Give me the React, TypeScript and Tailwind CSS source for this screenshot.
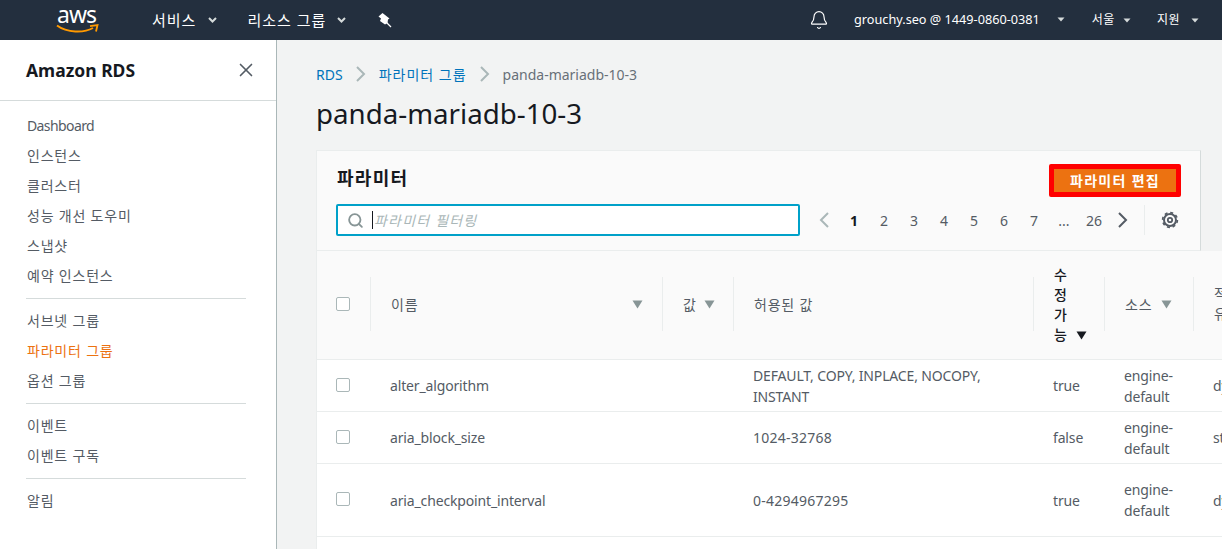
import { Bell, Search, X } from "lucide-react";

const font = "font-['Noto_Sans','Noto_Sans_CJK_KR',sans-serif]";

function NavChevron() {
  return (
    <svg width="9" height="6" viewBox="0 0 9 6" className="text-[#d5dbdb]">
      <path d="M1 1L4.5 4.5L8 1" stroke="currentColor" strokeWidth="2" fill="none" />
    </svg>
  );
}

function Caret() {
  return (
    <svg width="8" height="5" viewBox="0 0 8 5" className="text-[#d5dbdb]">
      <path d="M0.5 0.5H7.5L4 4.5Z" fill="currentColor" />
    </svg>
  );
}

function SortArrow({ dark }: { dark?: boolean }) {
  return (
    <svg width="11" height="9" viewBox="0 0 11 9" className={dark ? "text-[#16191f]" : "text-[#879596]"}>
      <path d="M0.5 0.5H10.5L5.5 8.5Z" fill="currentColor" />
    </svg>
  );
}

function Chevron({ left, className }: { left?: boolean; className: string }) {
  return (
    <svg width="10" height="16" viewBox="0 0 10 16" className={className}>
      <path d={left ? "M9 1L2 8L9 15" : "M1 1L8 8L1 15"} stroke="currentColor" strokeWidth="2" fill="none" />
    </svg>
  );
}

function PinIcon() {
  return (
    <svg width="14" height="15" viewBox="0 0 14 15" className="text-white">
      <path d="M4.5 0L0.5 3.5L3 5.5L2 8L7 11.5L9.5 10L10 6.5L11.5 5.5Z" fill="currentColor" />
      <path d="M8 9L13 14" stroke="currentColor" strokeWidth="1.3" />
    </svg>
  );
}

function GearIcon() {
  return (
    <svg width="18" height="18" viewBox="0 0 18 18" className="text-[#545b64]">
      <circle cx="9" cy="9" r="6" stroke="currentColor" strokeWidth="2" fill="none" />
      <circle cx="9" cy="9" r="2.2" stroke="currentColor" strokeWidth="1.8" fill="none" />
      <circle cx="9" cy="9" r="7.4" stroke="currentColor" strokeWidth="1.6" strokeDasharray="3 2.81" fill="none" />
    </svg>
  );
}

function Checkbox() {
  return <div className="w-[14px] h-[14px] rounded-[2px] border border-[#aab7b8] bg-white" />;
}

function AwsLogo() {
  return (
    <div className="relative w-[44px] h-[34px]">
      <span className="absolute left-[1px] top-[2px] text-[23px] leading-[18px] text-white tracking-[-1px]">aws</span>
      <svg width="43" height="12" viewBox="0 0 43 12" className="absolute left-0 top-[20px]">
        <path d="M1 2.5C11 10 28 10 37 5" stroke="#f90" strokeWidth="2" fill="none" />
        <path d="M34 3.2L41.5 2L40 8.5" stroke="#f90" strokeWidth="1.8" fill="none" />
      </svg>
    </div>
  );
}

function TopNav() {
  return (
    <header className="h-10 bg-[#232f3e] flex items-center text-white shrink-0">
      <div className="ml-[56px]">
        <AwsLogo />
      </div>
      <div className="ml-[52px] flex items-center gap-[12px] text-[15px] tracking-[1px]">
        <span>서비스</span>
        <NavChevron />
      </div>
      <div className="ml-[30px] flex items-center gap-[11px] text-[15px] tracking-[1px]">
        <span>리소스 그룹</span>
        <NavChevron />
      </div>
      <div className="ml-[32px] mt-[1px]">
        <PinIcon />
      </div>
      <Bell size={20} strokeWidth={1.4} className="ml-auto" />
      <div className="ml-[25px] flex items-center gap-[17px] text-[12.7px]">
        <span>grouchy.seo @ 1449-0860-0381</span>
        <Caret />
      </div>
      <div className="ml-[27px] flex items-center gap-[8px] text-[12px] tracking-[0.5px]">
        <span>서울</span>
        <Caret />
      </div>
      <div className="ml-[26px] mr-[23px] flex items-center gap-[11px] text-[12px] tracking-[0.5px]">
        <span>지원</span>
        <Caret />
      </div>
    </header>
  );
}

const navGroups = [
  ["Dashboard", "인스턴스", "클러스터", "성능 개선 도우미", "스냅샷", "예약 인스턴스"],
  ["서브넷 그룹", "파라미터 그룹", "옵션 그룹"],
  ["이벤트", "이벤트 구독"],
  ["알림"],
];

function Sidebar() {
  return (
    <aside className="w-[277px] shrink-0 bg-white border-r border-[#aab7b8]">
      <div className="h-[61px] border-b border-[#d5dbdb] flex items-center justify-between pl-[26px] pr-[19px]">
        <span className="text-[17.5px] font-bold text-[#16191f]">Amazon RDS</span>
        <X size={22} strokeWidth={1.8} className="text-[#545b64]" />
      </div>
      <nav className="pt-[10px] pl-[27px] pr-[30px] text-[14px] text-[#545b64]">
        {navGroups.map((group, i) => (
          <div key={i} className={i < navGroups.length - 1 ? "border-b border-[#d5dbdb] pb-[7px] mb-[7px] ml-[-1px]" : "ml-[-1px]"}>
            {group.map((item) => (
              <div
                key={item}
                className={`h-[30px] pl-[1px] flex items-center ${item === "Dashboard" ? "pb-[1px] tracking-[-0.6px]" : "pb-[2px] tracking-[0.8px]"} ${item === "파라미터 그룹" ? "text-[#ec7211]" : ""}`}
              >
                {item}
              </div>
            ))}
          </div>
        ))}
      </nav>
    </aside>
  );
}

function Pager() {
  const pages = ["1", "2", "3", "4", "5", "6", "7", "...", "26"];
  return (
    <div className="flex items-center h-[30px] text-[14px] text-[#545b64]">
      <Chevron left className="text-[#aab7b8] mr-[10px]" />
      {pages.map((p, i) => (
        <span key={p} className={`w-[30px] text-center ${i === 0 ? "text-[#16191f] font-bold" : ""}`}>
          {p}
        </span>
      ))}
      <Chevron className="ml-[9px]" />
      <div className="w-px h-[30px] bg-[#eaeded] ml-[16px]" />
      <div className="ml-[16px] mr-[1px]">
        <GearIcon />
      </div>
    </div>
  );
}

const colClass = {
  check: "w-[54px]",
  name: "w-[292px]",
  value: "w-[71px]",
  allowed: "w-[300px]",
  editable: "w-[71px]",
  source: "w-[89px]",
};

const rows = [
  { name: "alter_algorithm", allowed: "DEFAULT, COPY, INPLACE, NOCOPY, INSTANT", spacing: "tracking-[-0.15px]", editable: "true", type: "dynamic", h: "h-[52px]", box: "mt-[-1px]" },
  { name: "aria_block_size", allowed: "1024-32768", spacing: "tracking-[0.25px]", editable: "false", type: "static", h: "h-[52px]", box: "mt-[-1px]" },
  { name: "aria_checkpoint_interval", allowed: "0-4294967295", spacing: "tracking-[0.25px]", editable: "true", type: "dynamic", h: "h-[73px]", box: "mt-[-3px]" },
];

function HeaderDivider() {
  return <div className="w-px h-[54px] bg-[#eaeded] shrink-0 ml-auto" />;
}

function ParamTable() {
  return (
    <div className="w-[930px]">
      <div className="h-[109px] pb-[2px] flex items-center bg-[#fafafa] border-b border-[#eaeded] text-[14px] text-[#545b64] tracking-[0.8px]">
        <div className={`${colClass.check} shrink-0 flex items-center pl-[19px]`}>
          <Checkbox />
          <HeaderDivider />
        </div>
        <div className={`${colClass.name} shrink-0 flex items-center pl-[20px]`}>
          <span>이름</span>
          <div className="ml-auto mr-[19px]">
            <SortArrow />
          </div>
          <div className="w-px h-[54px] bg-[#eaeded] shrink-0" />
        </div>
        <div className={`${colClass.value} shrink-0 flex items-center pl-[20px] gap-[7px]`}>
          <span>값</span>
          <SortArrow />
          <HeaderDivider />
        </div>
        <div className={`${colClass.allowed} shrink-0 flex items-center pl-[20px]`}>
          <span>허용된 값</span>
          <HeaderDivider />
        </div>
        <div className={`${colClass.editable} shrink-0 flex items-center pl-[20px]`}>
          <div className="w-[36px] mt-[2px] leading-[20px] text-[#16191f] font-medium">
            <div>수</div>
            <div>정</div>
            <div>가</div>
            <div className="flex items-center gap-[8px]">
              능 <SortArrow dark />
            </div>
          </div>
          <HeaderDivider />
        </div>
        <div className={`${colClass.source} shrink-0 flex items-center pl-[20px] gap-[9px]`}>
          <span>소스</span>
          <SortArrow />
          <HeaderDivider />
        </div>
        <div className="pl-[20px] w-[34px] leading-[20px] whitespace-nowrap">
          <div>적용</div>
          <div>유형</div>
        </div>
      </div>
      {rows.map((r) => (
        <div key={r.name} className={`${r.h} flex items-center bg-white border-b border-[#eaeded] text-[14px] text-[#545b64] leading-[21px] tracking-[-0.15px]`}>
          <div className={`${colClass.check} shrink-0 pl-[19px] ${r.box}`}>
            <Checkbox />
          </div>
          <div className={`${colClass.name} shrink-0 pl-[19px]`}>{r.name}</div>
          <div className={`${colClass.value} shrink-0`} />
          <div className={`${colClass.allowed} shrink-0 pl-[19px] pr-[30px] ${r.spacing}`}>{r.allowed}</div>
          <div className={`${colClass.editable} shrink-0 pl-[19px]`}>{r.editable}</div>
          <div className={`${colClass.source} shrink-0 pl-[19px] pr-[10px]`}>engine-default</div>
          <div className="pl-[19px] whitespace-nowrap">{r.type}</div>
        </div>
      ))}
      <div className="h-[40px] bg-white" />
    </div>
  );
}

export default function App() {
  return (
    <div className={`h-[549px] w-[1222px] overflow-hidden flex flex-col bg-[#f2f3f3] ${font}`}>
      <TopNav />
      <div className="flex flex-1 min-h-0">
        <Sidebar />
        <main className="flex-1 min-w-0 overflow-hidden pl-[39px] pr-[21px]">
          <div className="flex items-center h-[20px] mt-[24px] text-[14px]">
            <span className="text-[#0073bb]">RDS</span>
            <Chevron className="text-[#aab7b8] mx-[13px]" />
            <span className="text-[#0073bb] tracking-[1px]">파라미터 그룹</span>
            <Chevron className="text-[#aab7b8] mx-[13px]" />
            <span className="text-[#687078]">panda-mariadb-10-3</span>
          </div>
          <h1 className="mt-[10px] text-[27.7px] leading-[38px] text-[#16191f]">panda-mariadb-10-3</h1>
          <section className="mt-[18px] border-l border-[#eaeded]">
            <div className="h-[101px] bg-[#fafafa] border-y border-r border-[#eaeded] border-r-[#d5dbdb] pl-[19px] pr-[20px] pt-[13px]">
              <div className="flex items-start justify-between">
                <h2 className="mt-[1px] ml-[1px] text-[18px] tracking-[1.3px] font-bold leading-[26px] text-[#16191f]">파라미터</h2>
                <button className="w-[132px] h-[33px] border-[5px] border-[#ff0000] rounded-[2px] bg-[#ec7211] text-white text-[14px] tracking-[1.3px] font-bold flex items-center justify-center mr-[-1px]">
                  파라미터 편집
                </button>
              </div>
              <div className="flex items-center justify-between mt-[7px]">
                <div className="w-[464px] h-[32px] bg-white border-2 border-[#00a1c9] rounded-[2px] flex items-center pl-[9px]">
                  <Search size={17} strokeWidth={2.6} className="text-[#879596]" />
                  <div className="w-px h-[18px] bg-[#16191f] ml-[8px]" />
                  <span className="text-[14px] italic text-[#aab7b8] ml-[1px] tracking-[1.2px]">파라미터 필터링</span>
                </div>
                <Pager />
              </div>
            </div>
            <ParamTable />
          </section>
        </main>
      </div>
    </div>
  );
}
